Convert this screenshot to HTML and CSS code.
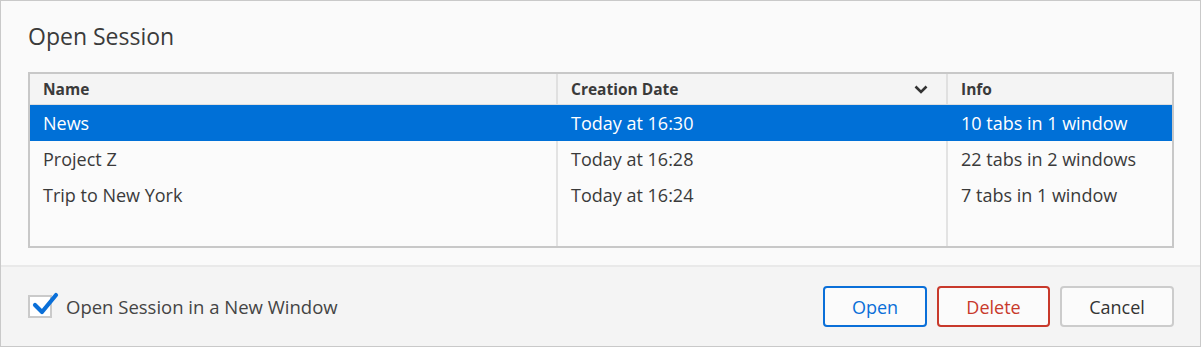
FILE: index.html
```html
<!DOCTYPE html>
<html lang="en">
<head>
    <meta charset="UTF-8">
    <title>Open Session</title>
    <link rel="stylesheet" href="styles.css">
</head>
<body>
    <div class="dialog">
        <div class="dialog-body">
            <h1 class="dialog-title">Open Session</h1>
            <div class="session-table">
                <div class="row head">
                    <div class="cell c-name">Name</div>
                    <div class="cell c-date">Creation Date
                        <svg class="sort" width="14" height="9" viewBox="0 0 14 9"><path d="M1.5 1.5 L7 7 L12.5 1.5" fill="none" stroke="#333" stroke-width="2.6"/></svg>
                    </div>
                    <div class="cell c-info">Info</div>
                </div>
                <div class="row selected">
                    <div class="cell c-name">News</div>
                    <div class="cell c-date">Today at 16:30</div>
                    <div class="cell c-info">10 tabs in 1 window</div>
                </div>
                <div class="row">
                    <div class="cell c-name">Project Z</div>
                    <div class="cell c-date">Today at 16:28</div>
                    <div class="cell c-info">22 tabs in 2 windows</div>
                </div>
                <div class="row">
                    <div class="cell c-name">Trip to New York</div>
                    <div class="cell c-date">Today at 16:24</div>
                    <div class="cell c-info">7 tabs in 1 window</div>
                </div>
                <div class="row filler">
                    <div class="cell c-name"></div>
                    <div class="cell c-date"></div>
                    <div class="cell c-info"></div>
                </div>
            </div>
        </div>
        <div class="dialog-footer">
            <label class="check">
                <span class="box">
                    <svg width="30" height="28" viewBox="0 0 30 28"><path d="M5 15 L12 22 L26 5" fill="none" stroke="#0a6fd8" stroke-width="4.2" stroke-linecap="round" stroke-linejoin="round"/></svg>
                </span>
                Open Session in a New Window
            </label>
            <div class="buttons">
                <button class="btn btn-open">Open</button>
                <button class="btn btn-delete">Delete</button>
                <button class="btn btn-cancel">Cancel</button>
            </div>
        </div>
    </div>
</body>
</html>
```

FILE: styles.css
```css
body {
    margin: 0;
    font-family: "Open Sans", "Noto Sans", sans-serif;
    color: #333;
    background-color: #fff;
}
.dialog {
    width: 1201px;
    height: 347px;
    box-sizing: border-box;
    border: 1px solid #c9c9c9;
    display: flex;
    flex-direction: column;
    background-color: #fafafa;
}
.dialog-body {
    padding: 0 26px 0 27px;
    height: 264px;
    box-sizing: border-box;
}
.dialog-title {
    font-size: 23px;
    font-weight: normal;
    color: #3b3b3b;
    margin: 0;
    padding-top: 20px;
    height: 71px;
    line-height: 30px;
    box-sizing: border-box;
}
.session-table {
    border: 2px solid #c8c8c8;
    height: 176px;
    box-sizing: border-box;
    display: flex;
    flex-direction: column;
    background-color: #fbfbfb;
}
.row {
    display: flex;
    height: 36px;
    font-size: 18px;
    line-height: 36px;
    color: #3a3a3a;
}
.cell {
    box-sizing: border-box;
    padding-left: 13px;
    border-right: 2px solid #e3e3e3;
    white-space: nowrap;
}
.c-name { width: 528px; }
.c-date { width: 390px; position: relative; }
.c-info { width: 224px; border-right: none; }
.row.head {
    height: 30px;
    line-height: 30px;
    font-size: 15.5px;
    font-weight: bold;
    background-color: #f4f4f4;
    border-bottom: 1px solid #dedede;
}
.row.head .cell {
    border-right-color: #e0e0e0;
}
.sort {
    position: absolute;
    right: 18px;
    top: 11px;
}
.row.selected {
    background-color: #0070d7;
    color: #fff;
}
.row.selected .cell {
    border-right-color: transparent;
}
.row.filler {
    flex: 1;
}
.dialog-footer {
    flex: 1;
    border-top: 2px solid #e9e9e9;
    background-color: #f4f4f4;
    display: flex;
    align-items: center;
    justify-content: space-between;
    padding: 0 26px 0 27px;
}
.check {
    display: flex;
    align-items: center;
    font-size: 18.5px;
    color: #444;
    gap: 14px;
}
.box {
    width: 24px;
    height: 23px;
    box-sizing: border-box;
    border: 2px solid #cacaca;
    background-color: #fff;
    position: relative;
}
.box svg {
    position: absolute;
    left: 0;
    top: -7px;
}
.buttons {
    display: flex;
    gap: 10px;
}
.btn {
    height: 41px;
    font-family: inherit;
    font-size: 18px;
    background-color: #fbfbfb;
    border: 2px solid #ccc;
    border-radius: 4px;
    color: #333;
}
.btn-open {
    width: 104px;
    border-color: #0a6fd8;
    color: #0a6fd8;
}
.btn-delete {
    width: 113px;
    border-color: #c8392b;
    color: #c8392b;
}
.btn-cancel {
    width: 114px;
}
```
